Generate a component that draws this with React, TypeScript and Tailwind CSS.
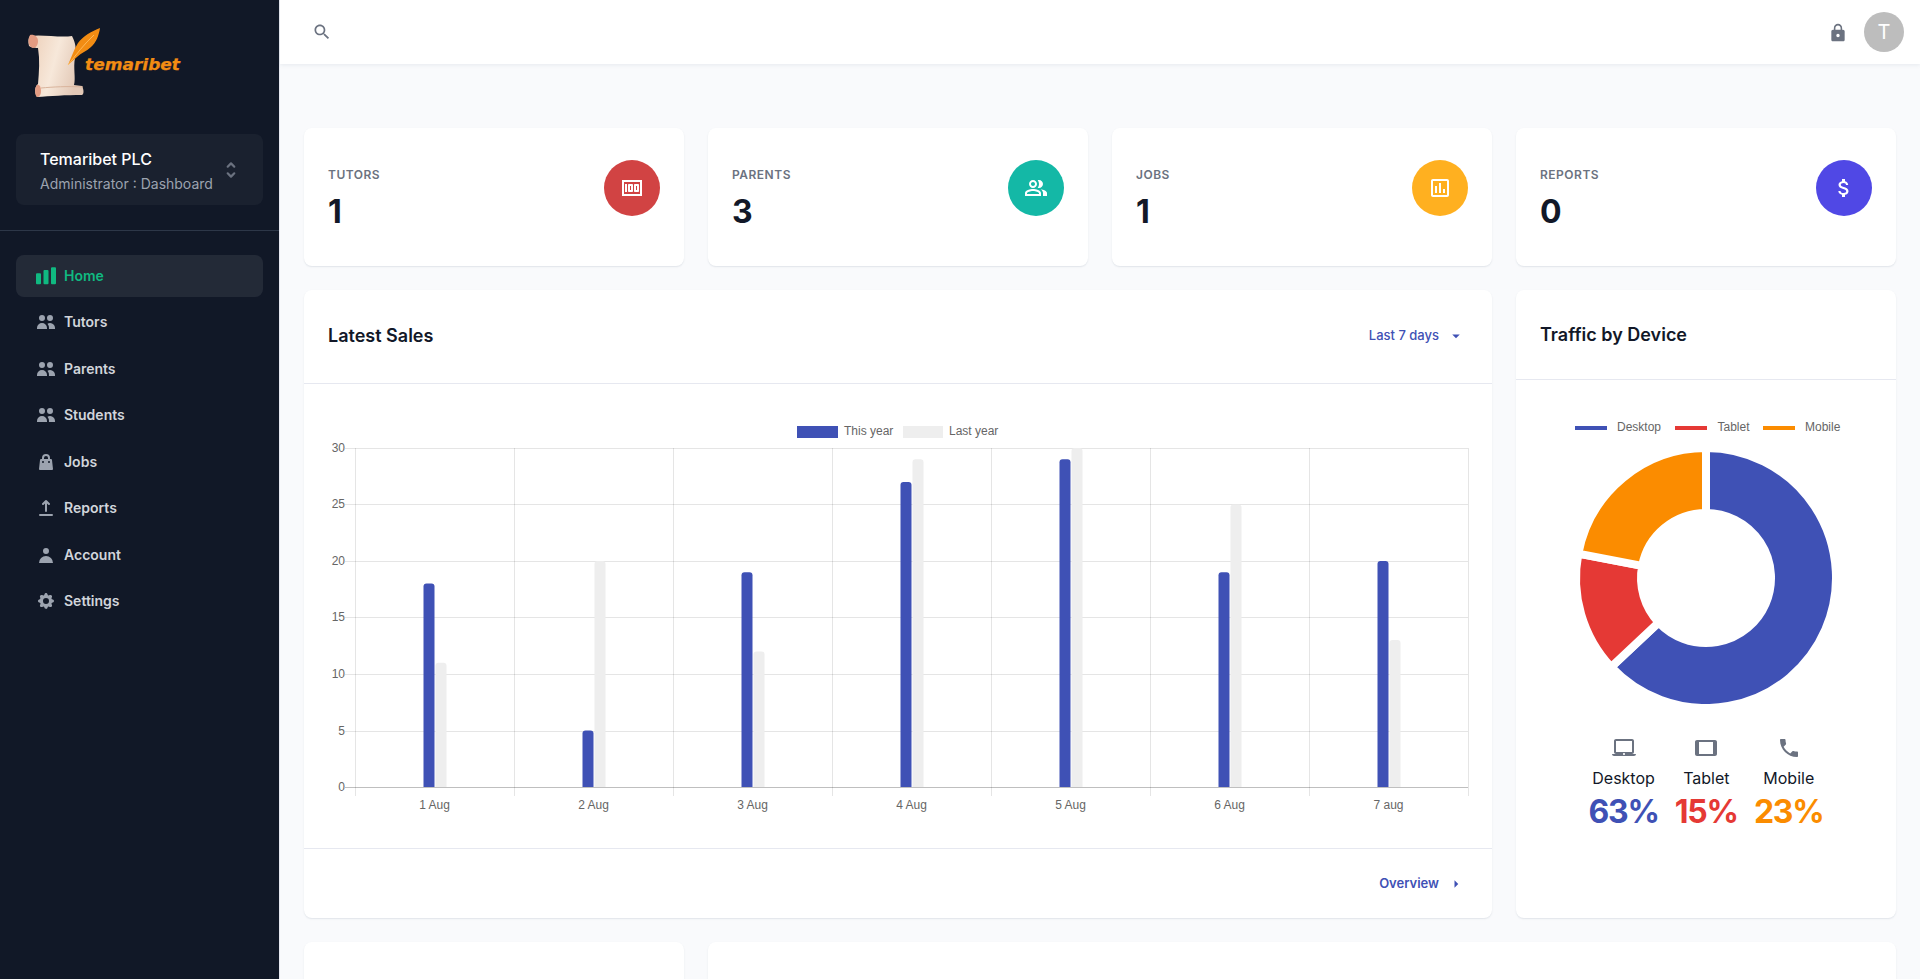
const chartBar = "M1 7.3h3a1 1 0 011 1v9a1 1 0 01-1 1H1a1 1 0 01-1-1v-9a1 1 0 011-1zM8.5 4h3a1 1 0 011 1v12.3a1 1 0 01-1 1h-3a1 1 0 01-1-1V5a1 1 0 011-1zM16 1.3h3a1 1 0 011 1v15a1 1 0 01-1 1h-3a1 1 0 01-1-1v-15a1 1 0 011-1z";
const users = "M9 6a3 3 0 11-6 0 3 3 0 016 0zM17 6a3 3 0 11-6 0 3 3 0 016 0zM12.93 17c.046-.327.07-.66.07-1a6.97 6.97 0 00-1.5-4.33A5 5 0 0119 16v1h-6.07zM6 11a5 5 0 015 5v1H1v-1a5 5 0 015-5z";
const bag = "M10 2a4 4 0 00-4 4v1H5a1 1 0 00-.994.89l-1 9A1 1 0 004 18h12a1 1 0 00.994-1.11l-1-9A1 1 0 0015 7h-1V6a4 4 0 00-4-4zm2 5V6a2 2 0 10-4 0v1h4zm-6 3a1 1 0 112 0 1 1 0 01-2 0zm7-1a1 1 0 100 2 1 1 0 000-2z";
const upload = "M3 17a1 1 0 011-1h12a1 1 0 110 2H4a1 1 0 01-1-1zM6.293 6.707a1 1 0 010-1.414l3-3a1 1 0 011.414 0l3 3a1 1 0 01-1.414 1.414L11 5.414V13a1 1 0 11-2 0V5.414L7.707 6.707a1 1 0 01-1.414 0z";
const user = "M10 9a3 3 0 100-6 3 3 0 000 6zm-7 9a7 7 0 1114 0H3z";
const cog = "M11.49 3.17c-.38-1.56-2.6-1.56-2.98 0a1.532 1.532 0 01-2.286.948c-1.372-.836-2.942.734-2.106 2.106.54.886.061 2.042-.947 2.287-1.561.379-1.561 2.6 0 2.978a1.532 1.532 0 01.947 2.287c-.836 1.372.734 2.942 2.106 2.106a1.532 1.532 0 012.287.947c.379 1.561 2.6 1.561 2.978 0a1.533 1.533 0 012.287-.947c1.372.836 2.942-.734 2.106-2.106a1.533 1.533 0 01.947-2.287c1.561-.379 1.561-2.6 0-2.978a1.532 1.532 0 01-.947-2.287c.836-1.372-.734-2.942-2.106-2.106a1.532 1.532 0 01-2.287-.947zM10 13a3 3 0 100-6 3 3 0 000 6z";
const selector = "M10 3a1 1 0 01.707.293l3 3a1 1 0 01-1.414 1.414L10 5.414 7.707 7.707a1 1 0 01-1.414-1.414l3-3A1 1 0 0110 3zm-3.707 9.293a1 1 0 011.414 0L10 14.586l2.293-2.293a1 1 0 011.414 1.414l-3 3a1 1 0 01-1.414 0l-3-3a1 1 0 010-1.414z";

const money = "M5 8h2v8H5zm7 0H9c-.55 0-1 .45-1 1v6c0 .55.45 1 1 1h3c.55 0 1-.45 1-1V9c0-.55-.45-1-1-1zm-1 6h-1v-4h1v4zm7-6h-3c-.55 0-1 .45-1 1v6c0 .55.45 1 1 1h3c.55 0 1-.45 1-1V9c0-.55-.45-1-1-1zm-1 6h-1v-4h1v4z M2 4v16h20V4H2zm2 14V6h16v12H4z";
const peopleOutlined = "M16.67 13.13C18.04 14.06 19 15.32 19 17v3h4v-3c0-2.18-3.57-3.47-6.33-3.87zM15 12c2.21 0 4-1.79 4-4s-1.79-4-4-4c-.47 0-.91.1-1.33.24C14.5 5.27 15 6.58 15 8s-.5 2.73-1.33 3.76c.42.14.86.24 1.33.24zM9 12c2.21 0 4-1.79 4-4s-1.79-4-4-4-4 1.79-4 4 1.79 4 4 4zm0-6c1.1 0 2 .9 2 2s-.9 2-2 2-2-.9-2-2 .9-2 2-2zm0 7c-2.67 0-8 1.34-8 4v3h16v-3c0-2.66-5.33-4-8-4zm6 5H3v-.99C3.2 16.29 6.3 15 9 15s5.8 1.29 6 2v1z";
const insertChart = "M9 17H7v-7h2v7zm4 0h-2V7h2v10zm4 0h-2v-4h2v4zm2 2H5V5h14v14zm.1-16H4.9C3.85 3 3 3.9 3 5v14c0 1.1.85 2 1.9 2h14.2c1.05 0 1.9-.9 1.9-2V5c0-1.1-.85-2-1.9-2z";
const dollar = "M11.8 10.9c-2.27-.59-3-1.2-3-2.15 0-1.09 1.01-1.85 2.7-1.85 1.78 0 2.44.85 2.5 2.1h2.21c-.07-1.72-1.12-3.3-3.21-3.81V3h-3v2.16c-1.94.42-3.5 1.68-3.5 3.61 0 2.31 1.91 3.46 4.7 4.13 2.5.6 3 1.48 3 2.41 0 .69-.49 1.79-2.7 1.79-2.06 0-2.87-.92-2.98-2.1h-2.2c.12 2.19 1.76 3.42 3.68 3.83V21h3v-2.15c1.95-.37 3.5-1.5 3.5-3.55 0-2.84-2.43-3.81-4.7-4.4z";
const search = "M15.5 14h-.79l-.28-.27C15.41 12.59 16 11.11 16 9.5 16 5.91 13.09 3 9.5 3S3 5.91 3 9.5 5.91 16 9.5 16c1.61 0 3.09-.59 4.23-1.57l.27.28v.79l5 4.99L20.49 19l-4.99-5zm-6 0C7.01 14 5 11.99 5 9.5S7.01 5 9.5 5 14 7.01 14 9.5 11.99 14 9.5 14z";
const lock = "M18 8h-1V6c0-2.76-2.24-5-5-5S7 3.24 7 6v2H6c-1.1 0-2 .9-2 2v10c0 1.1.9 2 2 2h12c1.1 0 2-.9 2-2V10c0-1.1-.9-2-2-2zm-6 9c-1.1 0-2-.9-2-2s.9-2 2-2 2 .9 2 2-.9 2-2 2zm3.1-9H8.9V6c0-1.71 1.39-3.1 3.1-3.1 1.71 0 3.1 1.39 3.1 3.1v2z";
const laptop = "M20 18c1.1 0 1.99-.9 1.99-2L22 5c0-1.1-.9-2-2-2H4c-1.1 0-2 .9-2 2v11c0 1.1.9 2 2 2H0c0 1.1.9 2 2 2h20c1.1 0 2-.9 2-2h-4zM4 5h16v11H4V5zm8 14c-.55 0-1-.45-1-1s.45-1 1-1 1 .45 1 1-.45 1-1 1z";
const tablet = "M21 4H3c-1.1 0-2 .9-2 2v12c0 1.1.9 2 2 2h18c1.1 0 1.99-.9 1.99-2L23 6c0-1.1-.9-2-2-2zm-2 14H5V6h14v12z";
const phone = "M6.62 10.79c1.44 2.83 3.76 5.14 6.59 6.59l2.2-2.2c.27-.27.67-.36 1.02-.24 1.12.37 2.33.57 3.57.57.55 0 1 .45 1 1V20c0 .55-.45 1-1 1-9.39 0-17-7.61-17-17 0-.55.45-1 1-1h3.5c.55 0 1 .45 1 1 0 1.25.2 2.45.57 3.57.11.35.03.74-.25 1.02l-2.2 2.2z";

const navItems = [
  { label: "Home", icon: chartBar, active: true },
  { label: "Tutors", icon: users },
  { label: "Parents", icon: users },
  { label: "Students", icon: users },
  { label: "Jobs", icon: bag },
  { label: "Reports", icon: upload },
  { label: "Account", icon: user },
  { label: "Settings", icon: cog },
];

const stats = [
  { label: "Tutors", value: "1", icon: money, bg: "bg-[#D14343]" },
  { label: "Parents", value: "3", icon: peopleOutlined, bg: "bg-[#14B8A6]" },
  { label: "Jobs", value: "1", icon: insertChart, bg: "bg-[#FFB020]" },
  { label: "Reports", value: "0", icon: dollar, bg: "bg-[#5048E5]" },
];

const days = ["1 Aug", "2 Aug", "3 Aug", "4 Aug", "5 Aug", "6 Aug", "7 aug"];
const thisYear = [18, 5, 19, 27, 29, 19, 20];
const lastYear = [11, 20, 12, 29, 30, 25, 13];
const gridYs = [448.5, 504.5, 561.5, 617.5, 674.5, 731.5, 787.5];

const cardClass =
  "bg-white rounded-lg shadow-[0_1px_1px_rgba(100,116,139,0.06),0_1px_2px_rgba(100,116,139,0.1)]";

function Icon({ d, className, box = 24 }: { d: string; className: string; box?: number }) {
  return (
    <svg viewBox={`0 0 ${box} ${box}`} fill="currentColor" className={className}>
      <path d={d} fillRule="evenodd" clipRule="evenodd" />
    </svg>
  );
}

function Logo() {
  return (
    <svg viewBox="0 0 200 110" className="block w-[200px] h-[110px]">
      <defs>
        <linearGradient id="paper" x1="0" y1="0" x2="1" y2="0.3">
          <stop offset="0" stopColor="#eccdb6" />
          <stop offset="0.55" stopColor="#f7e8da" />
          <stop offset="1" stopColor="#e2c8b6" />
        </linearGradient>
      </defs>
      {/* scroll */}
      <path d="M30 36 C42 34 60 38 72 36 C75 42 77 48 75 58 C73 68 76 78 74 85 L82 86 C84 90 84 94 82 95 C66 95 50 96 37 97 C34 92 35 86 38 84 C39 72 40 60 38 48 C34 48 30 47 29 46 C28 42 28 38 30 36 Z" fill="url(#paper)" />
      <path d="M30 35 C34 34 38 37 38 41 C38 45 36 48 33 48 C29 47 27 42 30 35 Z" fill="#e39b82" />
      <path d="M37 85 C39 84 41 86 41 91 C41 95 39 97 37 97 C35 96 34 88 37 85 Z" fill="#e39b82" />
      <path d="M41 88 C52 87 68 86 83 87" stroke="#d9b49c" strokeWidth="1" fill="none" />
      {/* quill */}
      <path d="M68 65 C72 56 74 49 78 43 C83 36 92 31 100 28 C99 35 96 43 91 47 C87 51 81 53 77 57 C74 60 71 62 68 65 Z" fill="#f28c13" />
      <path d="M68 65 C76 55 84 44 94 35" stroke="#ffc46b" strokeWidth="0.8" fill="none" />
      <text x="85" y="70" textLength="95" lengthAdjust="spacingAndGlyphs" fill="#f28c13" stroke="#f28c13" strokeWidth="0.25" className="font-['DejaVu_Sans',sans-serif] text-[16px] font-bold italic">
        temaribet
      </text>
    </svg>
  );
}

function Sidebar() {
  return (
    <aside className="w-[280px] shrink-0 bg-[#111827] border-r border-[#E6E8F0] flex flex-col">
      <div className="h-[134px]">
        <Logo />
      </div>
      <div className="mx-4 h-[71px] rounded-lg bg-white/[0.04] flex items-center justify-between pl-6 pr-[21px]">
        <div>
          <div className="text-base font-medium leading-[28px] text-white">Temaribet PLC</div>
          <div className="text-sm leading-[22px] text-[#9CA3AF]">Administrator : Dashboard</div>
        </div>
        <Icon d={selector} box={20} className="w-[22px] h-[22px] text-[#6B7280]" />
      </div>
      <div className="mt-[25px] h-px bg-[#2D3748]" />
      <nav className="mt-[23.5px] px-4 flex flex-col gap-1">
        {navItems.map((item) => (
          <a
            key={item.label}
            className={
              item.active
                ? "h-[42.5px] flex items-center gap-2 px-5 rounded-lg bg-white/[0.08] text-[#10B981] text-sm font-semibold"
                : "h-[42.5px] flex items-center gap-2 px-5 rounded-lg text-[#D1D5DB] text-sm font-semibold"
            }
          >
            <Icon
              d={item.icon}
              box={20}
              className={item.active ? "w-5 h-5 text-[#10B981]" : "w-5 h-5 text-[#9CA3AF]"}
            />
            {item.label}
          </a>
        ))}
      </nav>
    </aside>
  );
}

function TopBar() {
  return (
    <header className="h-16 shrink-0 bg-white shadow-[0_1px_4px_rgba(100,116,139,0.12)] flex items-center justify-between pl-[32px] pr-4 relative">
      <Icon d={search} className="w-5 h-5 text-[#6B7280]" />
      <div className="flex items-center gap-4">
        <Icon d={lock} className="w-5 h-5 mt-0.5 text-[#6B7280]" />
        <div className="w-10 h-10 rounded-full bg-[#BDBDBD] text-white text-xl flex items-center justify-center">T</div>
      </div>
    </header>
  );
}

function StatCard({ label, value, icon, bg }: { label: string; value: string; icon: string; bg: string }) {
  return (
    <div className={`${cardClass} px-6 py-8 flex justify-between`}>
      <div>
        <div className="text-xs font-semibold uppercase tracking-[0.5px] leading-[30px] text-[#6B7280]">{label}</div>
        <div className="text-[32px] font-bold leading-[44px] text-[#121828]">{value}</div>
      </div>
      <div className={`${bg} w-14 h-14 rounded-full flex items-center justify-center`}>
        <Icon d={icon} className="w-6 h-6 text-white" />
      </div>
    </div>
  );
}

function SalesChart() {
  const chartText = "font-['Liberation_Sans',sans-serif] text-[12px] fill-[#666666]";
  return (
    <svg viewBox="304 384 1188 464" className="block w-[1188px] h-[464px]">
      <rect x="797" y="426" width="41" height="12" fill="#3F51B5" />
      <text x="844" y="435" className={chartText}>This year</text>
      <rect x="903" y="426" width="40" height="12" fill="#EEEEEE" />
      <text x="949" y="435" className={chartText}>Last year</text>

      {gridYs.map((y, i) => (
        <g key={y}>
          <line x1="345" x2="1468" y1={y} y2={y} stroke={i === 6 ? "rgba(0,0,0,0.25)" : "rgba(0,0,0,0.1)"} />
          <text x="345" y={y + 3.5} textAnchor="end" className={chartText}>{30 - i * 5}</text>
        </g>
      ))}
      {Array.from({ length: 8 }, (_, i) => (
        <line key={i} x1={355.5 + i * 159} x2={355.5 + i * 159} y1="448" y2="796" stroke="rgba(0,0,0,0.1)" />
      ))}

      {days.map((day, i) => {
        const center = 355 + i * 159 + 79.5;
        const blue = (thisYear[i] / 30) * 339;
        const gray = (lastYear[i] / 30) * 339;
        return (
          <g key={day}>
            <path d={`M${center + 1} 787 V${787 - gray + 3} q0 -3 3 -3 h5 q3 0 3 3 V787 Z`} fill="#EEEEEE" />
            <path d={`M${center - 11} 787 V${787 - blue + 3} q0 -3 3 -3 h5 q3 0 3 3 V787 Z`} fill="#3F51B5" />
            <text x={center} y="808.5" textAnchor="middle" className={chartText}>{day}</text>
          </g>
        );
      })}
    </svg>
  );
}

function arc(from: number, to: number) {
  const [cx, cy, rO, rI] = [166, 174, 130, 65];
  const pt = (pct: number, r: number) => {
    const a = (pct / 100) * Math.PI * 2;
    return `${cx + r * Math.sin(a)} ${cy - r * Math.cos(a)}`;
  };
  const large = to - from > 50 ? 1 : 0;
  return `M${pt(from, rO)} A${rO} ${rO} 0 ${large} 1 ${pt(to, rO)} L${pt(to, rI)} A${rI} ${rI} 0 ${large} 0 ${pt(from, rI)} Z`;
}

function Donut() {
  const legendText = "font-['Liberation_Sans',sans-serif] text-[12px] fill-[#666666]";
  return (
    <svg viewBox="0 0 332 300" className="block w-[332px] h-[300px]">
      <rect x="35" y="22" width="32" height="4" fill="#3F51B5" />
      <text x="77" y="27" className={legendText}>Desktop</text>
      <rect x="135" y="22" width="32" height="4" fill="#E53935" />
      <text x="177.5" y="27" className={legendText}>Tablet</text>
      <rect x="223" y="22" width="32" height="4" fill="#FB8C00" />
      <text x="265" y="27" className={legendText}>Mobile</text>
      <path d={arc(0, 63)} fill="#3F51B5" stroke="#fff" strokeWidth="8" strokeLinejoin="bevel" />
      <path d={arc(63, 78)} fill="#E53935" stroke="#fff" strokeWidth="8" strokeLinejoin="bevel" />
      <path d={arc(78, 100)} fill="#FB8C00" stroke="#fff" strokeWidth="8" strokeLinejoin="bevel" />
    </svg>
  );
}

function DeviceStat({ icon, label, value, color }: { icon: string; label: string; value: string; color: string }) {
  return (
    <div className="p-2 text-center flex flex-col items-center">
      <Icon d={icon} className="w-6 h-6 text-[#6B7280]" />
      <div className="text-base leading-6 mt-1.5 text-[#121828]">{label}</div>
      <div className={`${color} text-[32px] font-bold tracking-[-1.2px] leading-[44px]`}>{value}</div>
    </div>
  );
}

export default function App() {
  return (
    <div className="flex h-[979px] overflow-hidden bg-[#F9FAFC] font-['Inter',sans-serif]">
      <Sidebar />
      <div className="flex-1 flex flex-col min-w-0">
        <TopBar />
        <main className="px-6 pt-16 grid grid-cols-4 gap-6 auto-rows-min">
          {stats.map((s) => (
            <StatCard key={s.label} {...s} />
          ))}

          <div className={`${cardClass} col-span-3 h-[628px] flex flex-col`}>
            <div className="h-[94px] shrink-0 border-b border-[#E6E8F0] flex items-center justify-between pl-6 pr-[27px] pb-0.5">
              <h2 className="text-lg font-semibold text-[#121828]">Latest Sales</h2>
              <div className="flex items-center gap-[8px] text-[13px] font-medium text-[#3F51B5]">
                Last 7 days
                <svg viewBox="0 0 24 24" fill="currentColor" className="w-[18px] h-[18px]">
                  <path d="M7 10l5 5 5-5z" />
                </svg>
              </div>
            </div>
            <SalesChart />
            <div className="flex-1 border-t border-[#E6E8F0] flex items-center justify-end pr-[27px] gap-[8px] text-[13px] font-semibold text-[#3F51B5]">
              Overview
              <svg viewBox="0 0 24 24" fill="currentColor" className="w-[18px] h-[18px]">
                <path d="M10 17l5-5-5-5z" />
              </svg>
            </div>
          </div>

          <div className={`${cardClass} h-[628px] flex flex-col`}>
            <div className="h-[90px] shrink-0 border-b border-[#E6E8F0] flex items-center px-6">
              <h2 className="text-lg font-semibold text-[#121828]">Traffic by Device</h2>
            </div>
            <div className="p-6">
              <Donut />
              <div className="flex justify-center pt-6">
                <DeviceStat icon={laptop} label="Desktop" value="63%" color="text-[#3F51B5]" />
                <DeviceStat icon={tablet} label="Tablet" value="15%" color="text-[#E53935]" />
                <DeviceStat icon={phone} label="Mobile" value="23%" color="text-[#FB8C00]" />
              </div>
            </div>
          </div>

          <div className={`${cardClass} h-[400px]`} />
          <div className={`${cardClass} col-span-3 h-[400px]`} />
        </main>
      </div>
    </div>
  );
}
